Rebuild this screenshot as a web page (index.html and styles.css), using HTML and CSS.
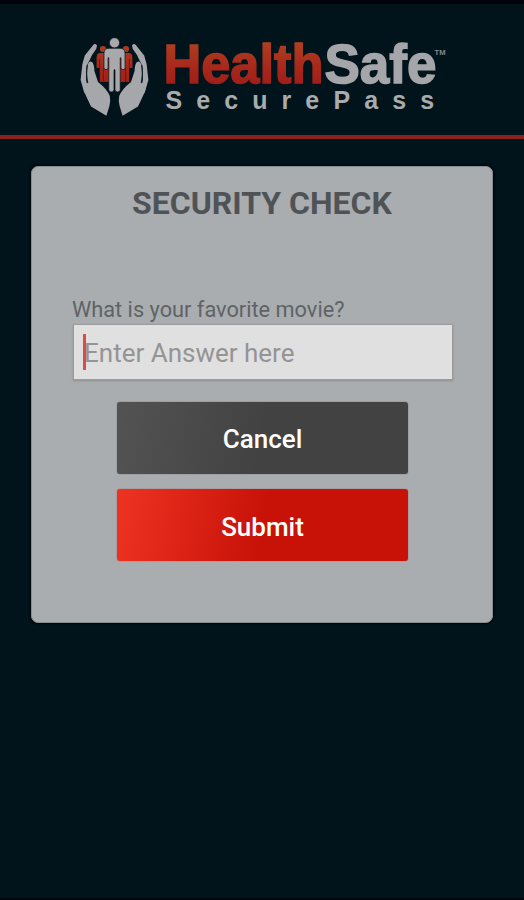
FILE: index.html
```html
<!DOCTYPE html>
<html lang="en">
<head>
    <meta charset="UTF-8">
    <meta name="viewport" content="width=device-width, initial-scale=1.0">
    <title>HealthSafe SecurePass</title>
    <link rel="stylesheet" href="styles.css">
</head>
<body>
    <header class="header">
        <svg class="logo" viewBox="78 32 372 88" role="img" aria-label="HealthSafe SecurePass">
            <defs>
                <linearGradient id="red" x1="0" y1="42" x2="0" y2="84" gradientUnits="userSpaceOnUse">
                    <stop offset="0" stop-color="#ad4020"/>
                    <stop offset="0.6" stop-color="#a8281b"/>
                    <stop offset="1" stop-color="#a01e18"/>
                </linearGradient>
                <g id="hand">
                    <path d="M93.6 44.4 Q95.6 43.2 97 45.4 L96.2 49 L92 55 L89.2 61 Q86.8 64 86.4 70 L86 79 L88 90 L84.4 93 L80.6 80 L82.4 64 L84.8 55.6 Z"/>
                    <path d="M87.6 83 Q86.4 72 88 64 Q89.4 60.6 92 62 Q94.2 64 94.4 71 L98 82 Q107 89 109.8 96 Q110.8 101 109.4 106 L106.4 115.8 L91 106.5 L84.2 92 L82.6 84 Z"/>
                </g>
                <g id="person">
                    <circle cx="103" cy="49" r="3.1"/>
                    <path d="M100 53 h6 q3.6 0 3.6 4 v25 h-9.8 v-14 h-3.2 v-10 q0-5 3.4-5z"/>
                </g>
            </defs>
            <!-- people -->
            <g fill="url(#red)">
                <use href="#person"/>
                <use href="#person" transform="translate(229 0) scale(-1 1)"/>
            </g>
            <path d="M99.6 59v9M129.4 59v9M103.4 68v14M125.6 68v14" stroke="#4d1512" stroke-width="0.7"/>
            <g fill="#a9a9ac" stroke="#06131a" stroke-width="0.7">
                <circle cx="114.5" cy="42.8" r="5.1"/>
                <path d="M109 48.3 h11 q5 0 5 5 v14.5 q0 1.8-2 1.8 t-2-1.8 v-10 h-0.8 v32 q0 2.2-2.6 2.2 t-2.6-2.2 v-20 h-1 v20 q0 2.2-2.6 2.2 t-2.6-2.2 v-32 h-0.8 v10 q0 1.8-2 1.8 t-2-1.8 v-14.5 q0-5 5-5z"/>
            </g>
            <g fill="#a6a7aa">
                <use href="#hand"/>
                <use href="#hand" transform="translate(229 0) scale(-1 1)"/>
            </g>
            <path d="M87.2 65 Q85.6 75 87.8 83M141.8 65 Q143.4 75 141.2 83" fill="none" stroke="#111d24" stroke-width="1.1"/>
            <text class="brand" x="163.4" y="83.3" textLength="160" lengthAdjust="spacingAndGlyphs" fill="url(#red)" stroke="url(#red)">Health</text>
            <text class="brand" x="324.4" y="83.3" textLength="112" lengthAdjust="spacingAndGlyphs" fill="#a5a6a9" stroke="#a5a6a9">Safe</text>
            <text class="tm" x="434.5" y="54.5" textLength="11" lengthAdjust="spacingAndGlyphs">TM</text>
            <text class="product" x="165.4" y="109">SecurePass</text>
        </svg>
    </header>

    <main class="card">
        <h1>SECURITY CHECK</h1>
        <form class="form">
            <label for="answer">What is your favorite movie?</label>
            <div class="field">
                <input type="text" id="answer" placeholder="Enter Answer here">
                <span class="caret"></span>
            </div>
            <div class="buttons">
                <button type="button" class="cancel">Cancel</button>
                <button type="submit" class="submit">Submit</button>
            </div>
        </form>
    </main>
</body>
</html>
```
FILE: styles.css
```css
* {
    box-sizing: border-box;
}
body {
    margin: 0;
    min-height: 900px;
    border-top: 4px solid #02030c;
    border-bottom: 2px solid #02080f;
    background-color: #01131b;
    font-family: Roboto, sans-serif;
}
.header {
    height: 135px;
    padding: 28px 0 0 78px;
    border-bottom: 4px solid #8a211d;
}
.logo {
    display: block;
    width: 372px;
    height: 88px;
}
.brand {
    font: bold 55px "Liberation Sans", Arial, sans-serif;
    stroke-width: 1.5px;
}
.tm {
    font: bold 7px "Liberation Sans", Arial, sans-serif;
    fill: #85888b;
}
.product {
    font: bold 25px "Liberation Sans", Arial, sans-serif;
    letter-spacing: 14.1px;
    fill: #a9abad;
}
.card {
    width: 462px;
    height: 457px;
    margin: 27px 0 0 31px;
    padding: 16px 41px 0;
    border: 1px solid #8b8e91;
    border-radius: 7px;
    background-color: #a9adb0;
    box-shadow: 0 0 2px 1px #00060a;
}
h1 {
    margin: 0;
    font-size: 32px;
    line-height: 40px;
    font-weight: 700;
    text-align: center;
    color: #505355;
}
.form {
    margin-top: 73px;
}
label {
    display: block;
    margin-left: -1px;
    font-size: 21.75px;
    line-height: 28px;
    color: #5f6365;
}
input {
    display: block;
    width: 380px;
    height: 56px;
    padding: 2px 10px 0;
    border: 1px solid #999c9d;
    border-radius: 0;
    background-color: #e0e0e0;
    box-shadow: 0 1px 2px #8d9192;
    font: 26px Roboto, sans-serif;
    outline: none;
}
input::placeholder {
    color: #949494;
}
.field {
    position: relative;
}
.caret {
    position: absolute;
    left: 10px;
    top: 10px;
    width: 3px;
    height: 36px;
    background-color: #e04a46;
}
.buttons {
    display: flex;
    flex-direction: column;
    gap: 15px;
    margin: 22px 44px 0;
}
button {
    height: 72px;
    width: 291px;
    padding: 2px 0 0;
    border: none;
    border-radius: 3px;
    font: 500 26px Roboto, sans-serif;
    color: #fff;
}
.cancel {
    background: linear-gradient(100deg, #535353, #424242 50%);
    box-shadow: 0 0 1px #333;
}
.submit {
    padding-top: 4px;
    background: linear-gradient(100deg, #ee3322, #c81208 50%);
    box-shadow: 0 0 1px #a00;
}
```
